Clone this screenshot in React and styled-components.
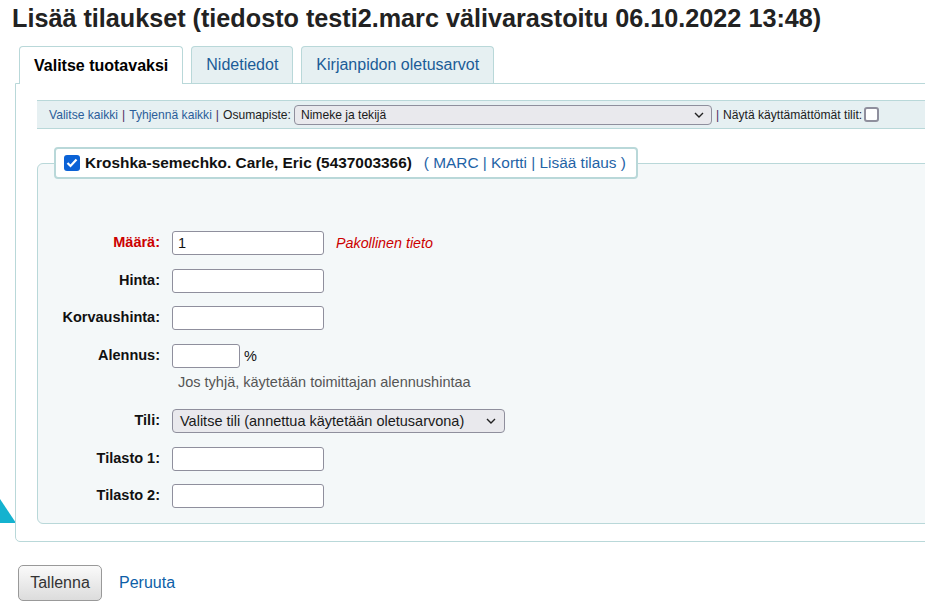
import React from 'react';
import styled, { createGlobalStyle } from 'styled-components';

const GlobalStyle = createGlobalStyle`
  html, body {
    margin: 0;
    padding: 0;
    overflow: hidden;
    background: #fff;
  }
  body {
    font-family: 'Liberation Sans', Arial, sans-serif;
    color: #111;
  }
`;

const Page = styled.div`
  width: 980px;
  padding: 0 0 0 15px;
  position: relative;
`;

const Title = styled.h1`
  margin: 0;
  padding: 4px 0 0 0;
  margin-left: -3px;
  font-size: 25.2px;
  line-height: 28px;
  font-weight: bold;
  color: #222;
`;

const TabList = styled.ul`
  list-style: none;
  margin: 14px 0 0 4px;
  padding: 0;
  display: flex;
  gap: 8px;
  position: relative;
  z-index: 2;
`;

const Tab = styled.li`
  box-sizing: border-box;
  padding: 0 14px;
  display: flex;
  align-items: center;
  font-size: 16px;
  border: 1px solid #b9d8d9;
  border-bottom: none;
  border-radius: 4px 4px 0 0;
  background: ${(p) => (p.active ? '#fff' : '#e6f0f2')};
  color: ${(p) => (p.active ? '#000' : '#1b5c97')};
  font-weight: ${(p) => (p.active ? 'bold' : 'normal')};
  height: ${(p) => (p.active ? '38px' : '37px')};
  margin-bottom: ${(p) => (p.active ? '-1px' : '0')};
`;

const Panel = styled.div`
  position: relative;
  z-index: 1;
  background: #fff;
  border: 1px solid #b9d8d9;
  border-radius: 0 0 5px 5px;
  padding: 16px 0 17px 21px;
`;

const Toolbar = styled.div`
  background: #e6f0f2;
  border-top: 1px solid #b9d8d9;
  border-bottom: 1px solid #b9d8d9;
  height: 27px;
  padding-left: 12px;
  display: flex;
  align-items: center;
  font-size: 12.1px;
  color: #222;
`;

const ToolLink = styled.a`
  color: #2b5e9a;
  text-decoration: none;
`;

const Sep = styled.span`
  color: #4b2a5e;
  margin: 0 4px;
`;

const FakeSelect = styled.div`
  box-sizing: border-box;
  width: ${(p) => p.width}px;
  height: ${(p) => p.height}px;
  margin-left: ${(p) => p.gap}px;
  background: #e9e9ed;
  border: 1px solid #8f8f9d;
  border-radius: 4px;
  display: flex;
  align-items: center;
  justify-content: space-between;
  padding: 0 ${(p) => p.padRight}px 0 ${(p) => p.padLeft}px;
  font-size: ${(p) => p.size}px;
  color: #1a1a1a;
`;

const EmptyBox = styled.span`
  display: inline-block;
  box-sizing: border-box;
  width: 15px;
  height: 15px;
  margin-left: 2px;
  border: 2px solid #8f8f9d;
  border-radius: 3px;
  background: #fff;
`;

const Fieldset = styled.fieldset`
  margin: 18px 0 0 0;
  padding: 0 16px 8px 16px;
  border: 1px solid #b9d8d9;
  border-radius: 6px;
  background: #f4f8f9;
`;

const Legend = styled.legend`
  background: #fff;
  border: 2px solid #b9d8d9;
  border-radius: 4px;
  padding: 0 8px 0 8px;
  height: 32px;
  box-sizing: border-box;
  display: flex;
  align-items: center;
  font-size: 15.4px;
`;

const CheckedBox = styled.span`
  width: 16px;
  height: 16px;
  border-radius: 3px;
  background: #0b62d6;
  display: inline-flex;
  align-items: center;
  justify-content: center;
  margin-right: 5px;
`;

const LegendTitle = styled.strong`
  font-weight: bold;
  color: #111;
`;

const LegendLinks = styled.span`
  color: #1f63a6;
  margin-left: 12px;
  padding-right: 2px;
`;

const FormList = styled.ol`
  list-style: none;
  margin: 45px 0 0 0;
  padding: 0;
`;

const Row = styled.li`
  display: flex;
  align-items: flex-start;
  padding: 7px 0 6.5px;
`;

const Label = styled.label`
  width: 106px;
  flex: none;
  text-align: right;
  font-size: 14.5px;
  font-weight: bold;
  line-height: 23px;
  margin-right: 12px;
  color: ${(p) => (p.required ? '#c00' : '#111')};
`;

const Field = styled.div`
  display: flex;
  flex-direction: column;
`;

const Line = styled.div`
  display: flex;
  align-items: center;
`;

const Input = styled.input`
  box-sizing: border-box;
  width: ${(p) => p.w || 152}px;
  height: 24px;
  margin: 0;
  border: 1px solid #8f8f9d;
  border-radius: 3px;
  padding: 0 5px;
  font-family: 'Liberation Sans', Arial, sans-serif;
  font-size: 14.5px;
  background: #fff;
  color: #111;
`;

const Required = styled.span`
  color: #c00;
  font-style: italic;
  font-size: 14.3px;
  margin-left: 12px;
`;

const Unit = styled.span`
  font-size: 14.5px;
  margin-left: 4px;
`;

const Hint = styled.div`
  color: #555;
  font-size: 14.5px;
  line-height: 17px;
  margin: 6px 0 5px 6px;
`;

const Actions = styled.div`
  display: flex;
  align-items: center;
  gap: 17px;
  margin: 23px 0 0 3px;
`;

const Button = styled.button`
  width: 84px;
  height: 36px;
  border: 1px solid #999;
  border-radius: 5px;
  background: linear-gradient(#fafafa, #dcdcdc);
  font-family: 'Liberation Sans', Arial, sans-serif;
  font-size: 16px;
  color: #333;
  padding: 0;
`;

const CancelLink = styled.a`
  color: #0d5fa8;
  font-size: 16px;
  text-decoration: none;
`;

const Corner = styled.svg`
  position: absolute;
  left: 0;
  top: 499px;
  z-index: 0;
`;

const Chevron = () => (
  <svg width="10" height="6" viewBox="0 0 10 6">
    <path d="M1 1l4 4 4-4" fill="none" stroke="#222" strokeWidth="1.4" />
  </svg>
);

export default function App() {
  return (
    <>
      <GlobalStyle />
      <Corner width="20" height="24" viewBox="0 0 20 24">
        <polygon points="0,0 16,24 0,24" fill="#14b2cf" />
      </Corner>
      <Page>
        <Title>Lisää tilaukset (tiedosto testi2.marc välivarastoitu 06.10.2022 13:48)</Title>
        <TabList>
          <Tab active>Valitse tuotavaksi</Tab>
          <Tab>Nidetiedot</Tab>
          <Tab>Kirjanpidon oletusarvot</Tab>
        </TabList>
        <Panel>
          <Toolbar>
            <ToolLink>Valitse kaikki</ToolLink>
            <Sep>|</Sep>
            <ToolLink>Tyhjennä kaikki</ToolLink>
            <Sep>|</Sep>
            <span>Osumapiste:</span>
            <FakeSelect width={418} height={20} size={12.1} gap={3} padLeft={6} padRight={7}>
              <span>Nimeke ja tekijä</span>
              <Chevron />
            </FakeSelect>
            <Sep>|</Sep>
            <span>Näytä käyttämättömät tilit:</span>
            <EmptyBox />
          </Toolbar>
          <Fieldset>
            <Legend>
              <CheckedBox>
                <svg width="12" height="10" viewBox="0 0 12 10">
                  <path d="M1.5 5l3 3 6-6.5" fill="none" stroke="#fff" strokeWidth="2.2" />
                </svg>
              </CheckedBox>
              <LegendTitle>Kroshka-semechko. Carle, Eric (5437003366)</LegendTitle>
              <LegendLinks>( MARC | Kortti | Lisää tilaus )</LegendLinks>
            </Legend>
            <FormList>
              <Row>
                <Label required>Määrä:</Label>
                <Line>
                  <Input defaultValue="1" />
                  <Required>Pakollinen tieto</Required>
                </Line>
              </Row>
              <Row>
                <Label>Hinta:</Label>
                <Input />
              </Row>
              <Row>
                <Label>Korvaushinta:</Label>
                <Input />
              </Row>
              <Row>
                <Label>Alennus:</Label>
                <Field>
                  <Line>
                    <Input w={68} />
                    <Unit>%</Unit>
                  </Line>
                  <Hint>Jos tyhjä, käytetään toimittajan alennushintaa</Hint>
                </Field>
              </Row>
              <Row>
                <Label>Tili:</Label>
                <FakeSelect width={333} height={24} size={14.5} gap={0} padLeft={7} padRight={8}>
                  <span>Valitse tili (annettua käytetään oletusarvona)</span>
                  <Chevron />
                </FakeSelect>
              </Row>
              <Row>
                <Label>Tilasto 1:</Label>
                <Input />
              </Row>
              <Row>
                <Label>Tilasto 2:</Label>
                <Input />
              </Row>
            </FormList>
          </Fieldset>
        </Panel>
        <Actions>
          <Button>Tallenna</Button>
          <CancelLink>Peruuta</CancelLink>
        </Actions>
      </Page>
    </>
  );
}
